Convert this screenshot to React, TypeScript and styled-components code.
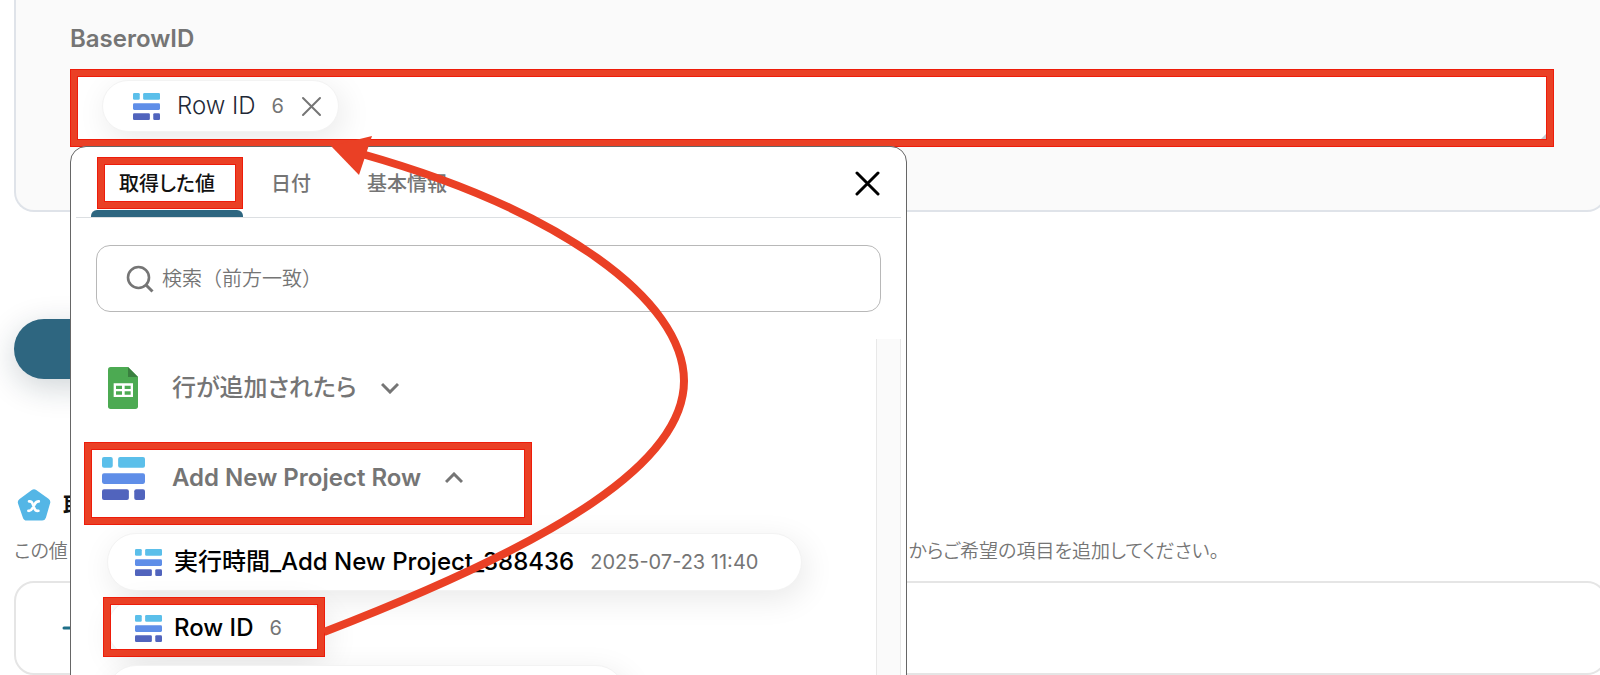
import React from "react";
import styled, { createGlobalStyle } from "styled-components";

const GlobalStyle = createGlobalStyle`
  *, *::before, *::after { box-sizing: border-box; }
  body {
    margin: 0;
    background: #fff;
    color: #111;
    font-family: Inter, "Noto Sans CJK JP", sans-serif;
    font-size: 20px;
    font-feature-settings: "palt";
  }
  button, input { font: inherit; color: inherit; font-feature-settings: inherit; }
  button { padding: 0; border: 0; background: none; cursor: pointer; }
  svg { display: block; flex: none; }
  h2, p, ul { margin: 0; padding: 0; list-style: none; }
`;

const Page = styled.main`
  position: relative;
  height: 100vh;
  overflow: hidden;
`;

const Content = styled.div`
  display: flex;
  flex-direction: column;
  margin: 0 -7px 0 14px;
`;

const Card = styled.section`
  padding: 27px 52px 63px;
  border: 2px solid #dfe3e9;
  border-top: 0;
  border-radius: 0 0 20px 20px;
  background: #fafafa;
`;

const FieldLabel = styled.div`
  margin-bottom: 18px;
  padding-left: 2px;
  color: #757575;
  font-size: 24px;
  font-weight: 600;
  line-height: 24px;
`;

const Field = styled.div`
  position: relative;
  margin: 0 -1px 0 2px;
`;

const TokenBox = styled.div`
  position: relative;
  display: flex;
  align-items: center;
  height: 78px;
  padding: 0 32px 4px;
  background: #fff;
`;

const Mark = styled.span<{ $inset?: string }>`
  position: absolute;
  inset: ${(p) => p.$inset ?? "0"};
  border: 1px solid #ee1c0a;
  box-shadow: inset 0 0 0 6px #ea4025, inset 0 0 0 7px #ee1c0a;
  pointer-events: none;
`;

const ResizeGrip = styled.svg`
  position: absolute;
  right: 8px;
  bottom: 8px;
`;

const Pill = styled.div<{ $small?: boolean }>`
  position: relative;
  display: flex;
  align-items: center;
  width: fit-content;
  height: ${(p) => (p.$small ? 52 : 58)}px;
  padding: ${(p) => (p.$small ? "0 16px 0 30px" : "0 43px 0 27px")};
  border: 1px solid #f3f3f3;
  border-radius: 29px;
  background: #fff;
  box-shadow: 4px 8px 32px rgba(0, 0, 0, 0.09);
`;

const BlankPill = styled(Pill)`
  width: 518px;
`;

const PillName = styled.span<{ $small?: boolean }>`
  margin-left: ${(p) => (p.$small ? 17 : 12)}px;
  color: ${(p) => (p.$small ? "#1f2937" : "#000")};
  font-size: 24px;
  font-weight: ${(p) => (p.$small ? 300 : 500)};
  line-height: 28px;
  white-space: nowrap;
`;

const PillValue = styled.span`
  margin-left: 16px;
  color: #757575;
  white-space: nowrap;
`;

const RemoveButton = styled.button`
  margin-left: 17px;
`;

const Popup = styled.div`
  position: absolute;
  z-index: 2;
  top: 100%;
  left: 0;
  width: 837px;
  height: 640px;
  margin-top: -1px;
  padding: 0 5px;
  display: flex;
  flex-direction: column;
  border: 1px solid #666;
  border-radius: 16px;
  background: #fff;
`;

const TabBar = styled.div`
  display: flex;
  align-items: stretch;
  height: 71px;
  padding: 0 18px 0 15px;
  border-bottom: 1px solid #dcdfe2;
`;

const Tab = styled.button<{ $active?: boolean }>`
  position: relative;
  padding: 0 28px;
  color: ${(p) => (p.$active ? "#111" : "#757575")};
  font-weight: 500;
  &::after {
    content: "";
    display: ${(p) => (p.$active ? "block" : "none")};
    position: absolute;
    inset: auto 0 0;
    height: 7px;
    border-radius: 6px 6px 0 0;
    background: #2e6680;
  }
`;

const CloseButton = styled.button`
  margin: 3px 0 0 auto;
  padding: 0 3px;
`;

const SearchBox = styled.label`
  display: flex;
  align-items: center;
  gap: 8px;
  height: 67px;
  margin: 27px 20px;
  padding: 0 29px;
  border: 1px solid #b8b8b8;
  border-radius: 14px;
`;

const SearchInput = styled.input`
  flex: 1;
  min-width: 0;
  padding: 0;
  border: 0;
  outline: 0;
  background: none;
  font-weight: 350;
  font-feature-settings: normal;
  &::placeholder { color: #757575; opacity: 1; }
`;

const ListArea = styled.div`
  display: flex;
  flex: 1;
  min-height: 0;
`;

const List = styled.div`
  flex: 1;
  padding: 4px 0 0 31px;
  overflow: hidden;
`;

const ScrollTrack = styled.div`
  width: 25px;
  border: solid #e8e8e8;
  border-width: 0 1px;
  background: #fafafa;
`;

const GroupButton = styled.button<{ $ja?: boolean }>`
  position: relative;
  display: flex;
  align-items: center;
  height: 90px;
  color: #757575;
  font-size: 24px;
  font-weight: ${(p) => (p.$ja ? 500 : 600)};
`;

const GroupIcon = styled.span`
  display: flex;
  justify-content: center;
  width: 44px;
  margin: 0 27px 0 -6px;
`;

const GroupName = styled.span`
  margin-right: 24px;
  line-height: 28px;
`;

const Items = styled.ul`
  display: flex;
  flex-direction: column;
  gap: 8px;
  padding-top: 10px;
`;

const SaveButton = styled.button`
  width: 480px;
  height: 60px;
  margin-top: 107px;
  border-radius: 30px;
  background: #2e6680;
  box-shadow: 0 8px 32px rgba(17, 40, 55, 0.2);
`;

const SectionHead = styled.div`
  display: flex;
  align-items: center;
  gap: 12px;
  height: 34px;
  margin: 109px 0 0 3px;
`;

const SectionTitle = styled.h2`
  font-size: 22px;
  font-weight: 700;
  line-height: 28px;
`;

const Note = styled.p`
  display: flex;
  justify-content: space-between;
  width: 1205px;
  margin: 15px 0 14px;
  color: #757575;
  font-size: 19px;
  font-weight: 350;
  line-height: 30px;
`;

const OutputBox = styled.section`
  display: flex;
  align-items: center;
  height: 94px;
  padding: 0 46px;
  border: 2px solid #e5e5e5;
  border-radius: 20px;
`;

const ArrowLayer = styled.svg`
  position: absolute;
  z-index: 3;
  top: 0;
  left: 0;
  pointer-events: none;
`;

const StackLogo = ({ size }: { size: number }) => (
  <svg width={size} height={size} viewBox="0 0 128 128" aria-hidden="true">
    <g fill="#5bbfea">
      <rect width="32" height="32" rx="6" />
      <rect x="48" width="80" height="32" rx="6" />
    </g>
    <rect y="48" width="128" height="32" rx="6" fill="#5f8ee8" />
    <g fill="#5164bd">
      <rect y="96" width="80" height="32" rx="6" />
      <rect x="96" y="96" width="32" height="32" rx="6" />
    </g>
  </svg>
);

const SheetLogo = () => (
  <svg width="30" height="42" viewBox="0 0 90 126" aria-hidden="true">
    <path d="M8 0H60L90 30V118Q90 126 82 126H8Q0 126 0 118V8Q0 0 8 0Z" fill="#4caa52" />
    <path d="M60 0L90 30H60Z" fill="#3a8040" />
    <path
      fill="#fff"
      fillRule="evenodd"
      d="M17 49H75V90H17ZM24 56V66H42V56ZM50 56V66H68V56ZM24 73V83H42V73ZM50 73V83H68V73Z"
    />
  </svg>
);

const Cross = ({ size, color, width }: { size: number; color: string; width: number }) => (
  <svg width={size} height={size} viewBox={`0 0 ${size} ${size}`} aria-hidden="true">
    <path
      d={`M2 2L${size - 2} ${size - 2}M${size - 2} 2L2 ${size - 2}`}
      stroke={color}
      strokeWidth={width}
      strokeLinecap="round"
    />
  </svg>
);

const Chevron = ({ up }: { up?: boolean }) => (
  <svg width="18" height="12" viewBox="0 0 18 12" fill="none" aria-hidden="true">
    <path d={up ? "M1 10L9 2L17 10" : "M1 2L9 10L17 2"} stroke="#757575" strokeWidth="3" />
  </svg>
);

const App = () => (
  <Page>
    <GlobalStyle />
    <Content>
      <Card>
        <FieldLabel id="field-label">BaserowID</FieldLabel>
        <Field>
          <TokenBox role="group" aria-labelledby="field-label">
            <Pill $small>
              <StackLogo size={27} />
              <PillName $small>Row ID</PillName>
              <PillValue>6</PillValue>
              <RemoveButton aria-label="Row IDを削除">
                <Cross size={21} color="#757575" width={2} />
              </RemoveButton>
            </Pill>
            <ResizeGrip width="5" height="5" viewBox="0 0 5 5" aria-hidden="true">
              <path d="M5 0V5H0Z" fill="#c4c8cc" />
            </ResizeGrip>
            <Mark />
          </TokenBox>
          <Popup>
            <TabBar role="tablist">
              <Tab role="tab" aria-selected="true" $active>
                取得した値
                <Mark $inset="10px 0 8px 6px" />
              </Tab>
              <Tab role="tab" aria-selected="false">日付</Tab>
              <Tab role="tab" aria-selected="false">基本情報</Tab>
              <CloseButton aria-label="閉じる">
                <Cross size={25} color="#000" width={3} />
              </CloseButton>
            </TabBar>
            <SearchBox>
              <svg width="28" height="28" viewBox="0 0 28 28" fill="none" aria-hidden="true">
                <circle cx="12.5" cy="12.5" r="10.5" stroke="#757575" strokeWidth="2.6" />
                <path d="M20 20L26.5 26.5" stroke="#757575" strokeWidth="3" />
              </svg>
              <SearchInput type="text" placeholder="検索（前方一致）" aria-label="検索" />
            </SearchBox>
            <ListArea>
              <List>
                <GroupButton $ja aria-expanded="false">
                  <GroupIcon><SheetLogo /></GroupIcon>
                  <GroupName>行が追加されたら</GroupName>
                  <Chevron />
                </GroupButton>
                <GroupButton aria-expanded="true">
                  <GroupIcon><StackLogo size={43} /></GroupIcon>
                  <GroupName>Add New Project Row</GroupName>
                  <Chevron up />
                  <Mark $inset="9px -69px -2px -23px" />
                </GroupButton>
                <Items>
                  <li>
                    <Pill>
                      <StackLogo size={27} />
                      <PillName>実行時間_Add New Project_388436</PillName>
                      <PillValue>2025-07-23 11:40</PillValue>
                    </Pill>
                  </li>
                  <li>
                    <Pill>
                      <StackLogo size={27} />
                      <PillName>Row ID</PillName>
                      <PillValue>6</PillValue>
                      <Mark $inset="-3px 0 -1px -5px" />
                    </Pill>
                  </li>
                  <li>
                    <BlankPill />
                  </li>
                </Items>
              </List>
              <ScrollTrack />
            </ListArea>
          </Popup>
        </Field>
      </Card>

      <SaveButton aria-label="保存する" />

      <SectionHead>
        <svg width="34" height="34" viewBox="0 0 34 34" aria-hidden="true">
          <path
            d="M14.8 2Q17 .6 19.2 2L31.5 10.8Q34 12.6 33.1 15.2L28.9 29.8Q28 32.6 25.2 32.6H9.6Q6.8 32.6 5.9 29.8L1 15.4Q.2 12.6 2.6 10.9Z"
            fill="#54b6e6"
          />
          <path
            d="M12 13.4Q14.6 13 15.4 15.4L17.6 20.8Q18.6 23.4 21.4 22.8M21.8 13.4Q19.4 13.2 17.8 16L15.4 20.4Q13.8 23.2 11.4 22.8"
            fill="none"
            stroke="#fff"
            strokeWidth="2.6"
            strokeLinecap="round"
          />
        </svg>
        <SectionTitle>取得した値</SectionTitle>
      </SectionHead>
      <Note>
        <span>この値</span>
        <span>からご希望の項目を追加してください。</span>
      </Note>
      <OutputBox>
        <button aria-label="項目を追加">
          <svg width="22" height="22" viewBox="0 0 22 22" aria-hidden="true">
            <path d="M2 11H20M11 2V20" stroke="#1f6f88" strokeWidth="3" strokeLinecap="round" />
          </svg>
        </button>
      </OutputBox>
    </Content>

    <ArrowLayer width="700" height="660" viewBox="0 0 700 660" aria-hidden="true">
      <path
        d="M324 632C560 541 684 462 684 381C684 300 560 210 362 154"
        fill="none"
        stroke="#ea4025"
        strokeWidth="8"
      />
      <path d="M331 146L372 136L359 175Z" fill="#ea4025" />
    </ArrowLayer>
  </Page>
);

export default App;
